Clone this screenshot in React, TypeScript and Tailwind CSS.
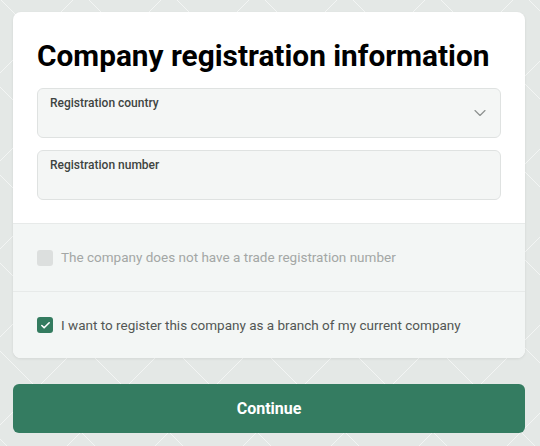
import { ChevronDown, Check } from "lucide-react";

function Field({ label, select }: { label: string; select?: boolean }) {
  return (
    <div className="relative h-[50px] rounded-md border border-[#dfe2e1] bg-[#f4f6f5] px-3 pt-[6px]">
      <span className="block text-[12px] font-medium leading-4 text-[#3e4441]">{label}</span>
      {select && (
        <ChevronDown
          className="absolute right-[10px] top-[14px] text-[#8d918f]"
          size={20}
          strokeWidth={1.4}
        />
      )}
    </div>
  );
}

export default function App() {
  return (
    <main
      className="relative h-[446px] w-[540px] overflow-hidden bg-[#e4e8e6] pl-[13px] pr-[15px] pt-[12px]"
      style={{ fontFamily: "Roboto, 'Liberation Sans', sans-serif" }}
    >
      {/* background lattice */}
      <svg className="absolute inset-0 h-full w-full" aria-hidden="true">
        <defs>
          <pattern id="lattice" width="88" height="88" patternUnits="userSpaceOnUse" x="-7" y="-8">
            <path d="M0 0 L88 88 M88 0 L0 88" stroke="#ffffff" strokeOpacity="0.55" strokeWidth="1" fill="none" />
          </pattern>
        </defs>
        <rect width="100%" height="100%" fill="url(#lattice)" />
      </svg>

      <div className="relative overflow-hidden rounded-lg bg-white shadow-[0_1px_3px_rgba(0,0,0,0.08)]">
        <section className="px-6 pb-[23px] pt-[27px]">
          <h1 className="text-[29.8px] font-bold leading-[34px] text-black">
            Company registration information
          </h1>
          <div className="mt-[15px] flex flex-col gap-3">
            <Field label="Registration country" select />
            <Field label="Registration number" />
          </div>
        </section>

        <div className="border-t border-[#e7eae9] bg-[#f3f6f5]">
          <label className="flex h-[67px] items-center gap-2 px-6">
            <span className="h-4 w-4 rounded-[3px] bg-[#dcdfde]" />
            <span className="text-[13.5px] text-[#a3a7a5]">
              The company does not have a trade registration number
            </span>
          </label>
          <label className="flex h-[67px] items-center gap-2 border-t border-[#e7eae9] px-6">
            <span className="flex h-4 w-4 items-center justify-center rounded-[3px] bg-[#337b5f]">
              <Check size={11} strokeWidth={3.5} className="text-white" />
            </span>
            <span className="text-[13.5px] text-[#525754]">
              I want to register this company as a branch of my current company
            </span>
          </label>
        </div>
      </div>

      <button className="relative mt-[26px] flex h-[49px] w-full items-center justify-center rounded-md bg-[#347c61] text-[16px] font-bold text-white">
        Continue
      </button>
    </main>
  );
}
